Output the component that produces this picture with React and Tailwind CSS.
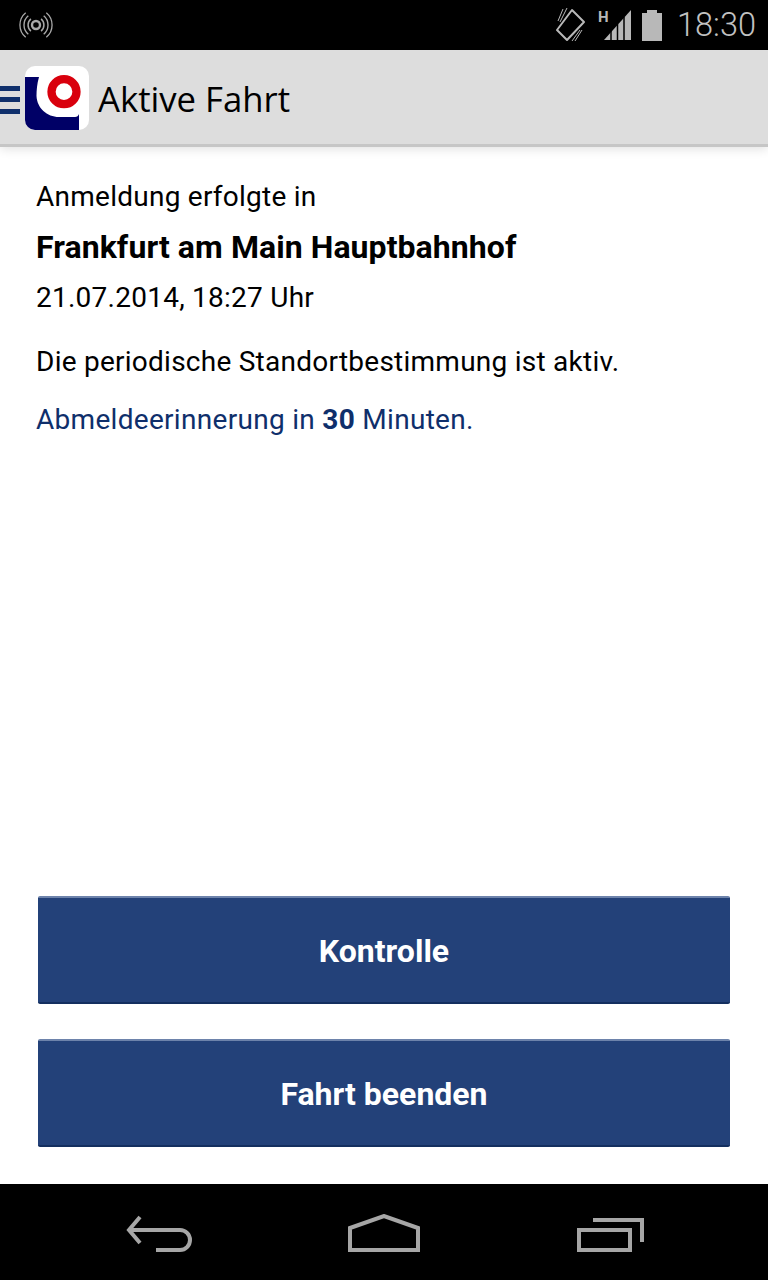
const StatusBar = () => (
  <div className="flex h-[50px] items-center justify-between bg-black pl-[19px] pr-[12px]">
    <svg width="34" height="28" viewBox="0 0 34 28" fill="none" stroke="#a8a8a8">
      <circle cx="17" cy="14" r="4" strokeWidth="2.4" />
      <path d="M11.900 7.900A8 8 0 0 0 11.900 20.100M22.100 7.900A8 8 0 0 1 22.100 20.100" strokeWidth="1.5" />
      <path d="M9.300 4.800A12 12 0 0 0 9.300 23.200M24.700 4.800A12 12 0 0 1 24.700 23.200" strokeWidth="1.4" />
      <path d="M6.700 1.700A16 16 0 0 0 6.700 26.300M27.300 1.700A16 16 0 0 1 27.300 26.300" strokeWidth="1.300" />
    </svg>
    <div className="flex items-center">
      <svg width="32" height="44" viewBox="0 0 32 44" fill="none" stroke="#b8b8b8" className="mr-[17px]">
        <path d="M17 7 29 19 12 37 2 27z" strokeWidth="2" strokeLinejoin="round" />
        <path d="M8 6 3 18M12 5 5 19M20 38l7-11M17 38l8-11" strokeWidth="1" />
      </svg>
      <div className="relative mr-[10px]">
        <svg width="28" height="32" viewBox="0 0 28 32" className="block">
          <path d="M0 31 27 1v30z" fill="#b8b8b8" />
          <path d="M7 31V22M13.500 31V15M20 31V8" stroke="#000" strokeWidth="1.500" />
        </svg>
        <span className="absolute top-[-1px] left-[-6px] font-['Roboto',sans-serif] text-[15px] leading-[18px] font-bold text-[#b8b8b8]">H</span>
      </div>
      <svg width="20" height="31" viewBox="0 0 20 31" className="mr-[15px]">
        <path d="M5 0h10v3h5v28H0V3h5z" fill="#b8b8b8" />
      </svg>
      <span className="font-['Roboto',sans-serif] text-[32.5px] leading-none font-light text-[#c2c2c2]">18:30</span>
    </div>
  </div>
);

const AppHeader = () => (
  <div className="relative flex h-[97px] items-center border-b-[3px] border-[#c6c6c6] bg-[#dddddd] pt-[2px] shadow-[0_2px_10px_rgba(0,0,0,0.12)]">
    <div className="mt-[3px] flex w-[20px] flex-col gap-[6.5px]">
      <div className="h-[5px] bg-[#0f2f6b]" />
      <div className="h-[5px] bg-[#0f2f6b]" />
      <div className="h-[5px] bg-[#0f2f6b]" />
    </div>
    <svg width="64" height="64" viewBox="0 0 64 64" className="ml-[5px]">
      <rect width="64" height="64" rx="10" fill="#fff" />
      <path d="M0 11H14C12 18 11.500 24 11.500 30 12 42 22 51 34 51H50Q53 51 54 48V64H10A10 10 0 0 1 0 54z" fill="#000066" />
      <circle cx="39" cy="25.700" r="12.500" fill="none" stroke="#d9000d" strokeWidth="8.300" />
    </svg>
    <span className="mt-[2px] ml-[9px] font-['Open_Sans',sans-serif] text-[34.700px] leading-none text-black">Aktive Fahrt</span>
  </div>
);

const ActionButton = ({ label }) => (
  <button className="h-[108px] w-full rounded-[2px] border-t-2 border-b-2 border-t-[#6d83ab] border-b-[#142f5f] bg-[#234179] pt-[2px] font-['Roboto',sans-serif] text-[32px] font-bold text-white">
    {label}
  </button>
);

const NavBar = () => (
  <div className="flex h-[96px] items-center justify-between bg-black pt-[4px] pl-[125px] pr-[124px]">
    <svg width="70" height="40" viewBox="0 0 70 40" fill="none" stroke="#a6a6a6" strokeWidth="4">
      <path d="M15 3 4 16l11 13" />
      <path d="M4 16h51a10 10 0 0 1 0 20H31" />
    </svg>
    <svg width="74" height="40" viewBox="0 0 74 40" fill="none" stroke="#a6a6a6" strokeWidth="4">
      <path d="M2 36V14L36 2l34 12v22z" />
    </svg>
    <svg width="70" height="40" viewBox="0 0 70 40" fill="none" stroke="#a6a6a6" strokeWidth="4">
      <path d="M19 6h49v22" />
      <path d="M5 16h51v20H5z" />
    </svg>
  </div>
);

export default function App() {
  return (
    <div className="flex h-[1280px] w-[768px] flex-col bg-white font-['Roboto',sans-serif]">
      <StatusBar />
      <AppHeader />
      <div className="flex flex-1 flex-col justify-between pb-[37px]">
        <div className="px-[36px] pt-[32px] text-[28px] leading-[36px] tracking-[0.25px] text-black">
          <p>Anmeldung erfolgte in</p>
          <p className="mt-[14px] text-[32px] font-bold tracking-[0.07px]">Frankfurt am Main Hauptbahnhof</p>
          <p className="mt-[15px]">21.07.2014, 18:27 Uhr</p>
          <p className="mt-[28px]">Die periodische Standortbestimmung ist aktiv.</p>
          <p className="mt-[22px] tracking-[0.3px] text-[#0f2f6b]">
            Abmeldeerinnerung in <span className="font-bold">30</span> Minuten.
          </p>
        </div>
        <div className="flex flex-col gap-[35px] pl-[38px] pr-[38px]">
          <ActionButton label="Kontrolle" />
          <ActionButton label="Fahrt beenden" />
        </div>
      </div>
      <NavBar />
    </div>
  );
}
